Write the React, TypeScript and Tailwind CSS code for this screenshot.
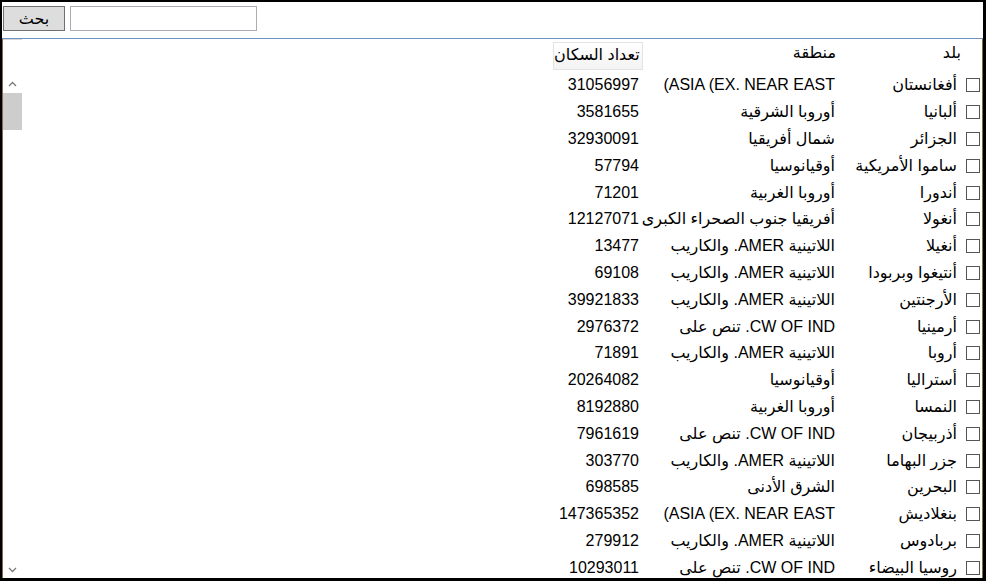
import React from "react";

type Row = { name: string; region: string; pop: string; ltr?: boolean };

const AMER = "اللاتينية AMER. والكاريب";
const CW = "CW OF IND. تنص على";

const rows: Row[] = [
  { name: "أفغانستان", region: "(ASIA (EX. NEAR EAST", pop: "31056997", ltr: true },
  { name: "ألبانيا", region: "أوروبا الشرقية", pop: "3581655" },
  { name: "الجزائر", region: "شمال أفريقيا", pop: "32930091" },
  { name: "ساموا الأمريكية", region: "أوقيانوسيا", pop: "57794" },
  { name: "أندورا", region: "أوروبا الغربية", pop: "71201" },
  { name: "أنغولا", region: "أفريقيا جنوب الصحراء الكبرى", pop: "12127071" },
  { name: "أنغيلا", region: AMER, pop: "13477" },
  { name: "أنتيغوا وبربودا", region: AMER, pop: "69108" },
  { name: "الأرجنتين", region: AMER, pop: "39921833" },
  { name: "أرمينيا", region: CW, pop: "2976372" },
  { name: "أروبا", region: AMER, pop: "71891" },
  { name: "أستراليا", region: "أوقيانوسيا", pop: "20264082" },
  { name: "النمسا", region: "أوروبا الغربية", pop: "8192880" },
  { name: "أذربيجان", region: CW, pop: "7961619" },
  { name: "جزر البهاما", region: AMER, pop: "303770" },
  { name: "البحرين", region: "الشرق الأدنى", pop: "698585" },
  { name: "بنغلاديش", region: "(ASIA (EX. NEAR EAST", pop: "147365352", ltr: true },
  { name: "بربادوس", region: AMER, pop: "279912" },
  { name: "روسيا البيضاء", region: CW, pop: "10293011" },
];

const font = { fontFamily: '"Liberation Sans", Arial, "DejaVu Sans", sans-serif' };

export default function App() {
  return (
    <div
      className="w-[986px] h-[581px] bg-white text-black text-[16px] flex flex-col border-t-2 border-l-2 border-r-[3px] border-b-[3px] border-black overflow-hidden"
      style={font}
    >
      {/* toolbar */}
      <div className="h-[36px] flex items-start pl-[1px] pt-[4px] shrink-0">
        <button className="w-[62px] h-[25px] bg-[#dddddd] border border-[#707070] flex items-center justify-center leading-none text-[16px]">
          <span dir="rtl">بحث</span>
        </button>
        <input className="ml-[5px] w-[187px] h-[25px] border border-[#abadb3] bg-white outline-none" />
      </div>
      <div className="h-[1px] bg-[#6e93bd] shrink-0" />
      {/* panel */}
      <div className="flex-1 flex flex-col border-l border-r border-[#8a6a3f] min-h-0">
        {/* header */}
        <div className="h-[32px] flex items-start shrink-0 whitespace-nowrap">
          <div className="w-[19px] h-[1px] bg-[#d6d6d6] mr-auto" />
          <div className="mt-[3px] w-[90px] h-[28px] border border-[#e3e3e3] bg-gradient-to-b from-white to-[#f3f3f3] text-right pr-[4px] leading-[24px]">
            <span dir="rtl">تعداد السكان</span>
          </div>
          <div className="w-[193px] text-right mt-[3px] leading-[22px]">
            <span dir="rtl">منطقة</span>
          </div>
          <div className="w-[125px] text-right mt-[3px] leading-[22px]">
            <span dir="rtl">بلد</span>
          </div>
          <div className="w-[21px]" />
        </div>
        {/* body */}
        <div className="flex-1 flex min-h-0">
          {/* scrollbar */}
          <div className="w-[19px] flex flex-col pt-[4px] shrink-0">
            <div className="h-[18px] flex items-center justify-center">
              <svg width="9" height="6" viewBox="0 0 9 6">
                <path d="M1 5 L4.5 1.5 L8 5" fill="none" stroke="#7a7a7a" strokeWidth="1.3" />
              </svg>
            </div>
            <div className="h-[37px] bg-[#cdcdcd]" />
            <div className="flex-1" />
            <div className="h-[16px] flex items-center justify-center">
              <svg width="9" height="6" viewBox="0 0 9 6">
                <path d="M1 1 L4.5 4.5 L8 1" fill="none" stroke="#7a7a7a" strokeWidth="1.3" />
              </svg>
            </div>
          </div>
          {/* rows */}
          <div className="flex-1 flex flex-col overflow-hidden pt-[1px]">
            {rows.map((r, i) => (
              <div key={i} className="h-[26.8px] shrink-0 flex items-center justify-end whitespace-nowrap">
                <div className="w-[100px] text-right">{r.pop}</div>
                <div className="w-[196px] text-right">
                  <span dir={r.ltr ? "ltr" : "rtl"}>{r.region}</span>
                </div>
                <div className="w-[122px] text-right">
                  <span dir="rtl">{r.name}</span>
                </div>
                <div className="w-[25px] flex justify-end pr-[2px]">
                  <div className="w-[14px] h-[14px] border border-[#555] bg-white" />
                </div>
              </div>
            ))}
          </div>
        </div>
      </div>
    </div>
  );
}
